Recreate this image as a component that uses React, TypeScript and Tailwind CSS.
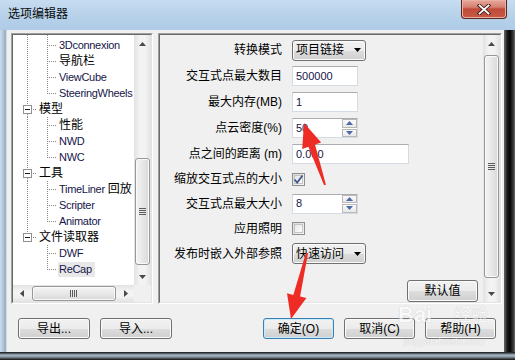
import React from "react";

const F = "font-[family-name:Liberation_Sans,Noto_Sans_CJK_SC,sans-serif]";

type LineMode = "full" | "top" | "none";

function ChildLines({ a, b }: { a: LineMode; b: LineMode }) {
  return (
    <svg width="45" height="16" className="shrink-0 block">
      {a !== "none" && (
        <line x1="14.5" y1="0" x2="14.5" y2={a === "full" ? 16 : 8} stroke="#8a8a8a" strokeDasharray="1 1" />
      )}
      {b !== "none" && (
        <line x1="34.5" y1="0" x2="34.5" y2={b === "full" ? 16 : 9} stroke="#8a8a8a" strokeDasharray="1 1" />
      )}
      <line x1="36" y1="8.5" x2="44" y2="8.5" stroke="#8a8a8a" strokeDasharray="1 1" />
    </svg>
  );
}

function ParentLines({ a }: { a: LineMode }) {
  return (
    <svg width="25" height="16" className="shrink-0 block">
      <line x1="14.5" y1="0" x2="14.5" y2="4" stroke="#8a8a8a" strokeDasharray="1 1" />
      {a === "full" && <line x1="14.5" y1="13" x2="14.5" y2="16" stroke="#8a8a8a" strokeDasharray="1 1" />}
      <rect x="10.5" y="4.5" width="8" height="8" fill="#fff" stroke="#919191" />
      <line x1="12" y1="8.5" x2="17" y2="8.5" stroke="#1a1a1a" />
      <line x1="20" y1="8.5" x2="24" y2="8.5" stroke="#8a8a8a" strokeDasharray="1 1" />
    </svg>
  );
}

type TreeRow = {
  kind: "child" | "parent";
  a: LineMode;
  b?: LineMode;
  label: React.ReactNode;
  selected?: boolean;
};

const lat = (t: string) => <span className="text-[11px] tracking-[-0.3px] text-[#16164a]">{t}</span>;
const cjk = (t: string) => <span className="text-[12px] text-black">{t}</span>;

const rows: TreeRow[] = [
  { kind: "child", a: "full", b: "full", label: lat("3Dconnexion") },
  { kind: "child", a: "full", b: "full", label: cjk("导航栏") },
  { kind: "child", a: "full", b: "full", label: lat("ViewCube") },
  { kind: "child", a: "full", b: "top", label: lat("SteeringWheels") },
  { kind: "parent", a: "full", label: cjk("模型") },
  { kind: "child", a: "full", b: "full", label: cjk("性能") },
  { kind: "child", a: "full", b: "full", label: lat("NWD") },
  { kind: "child", a: "full", b: "top", label: lat("NWC") },
  { kind: "parent", a: "full", label: cjk("工具") },
  {
    kind: "child",
    a: "full",
    b: "full",
    label: (
      <>
        {lat("TimeLiner")}
        <span className="ml-[3px] text-[12px] text-black">回放</span>
      </>
    ),
  },
  { kind: "child", a: "full", b: "full", label: lat("Scripter") },
  { kind: "child", a: "full", b: "top", label: lat("Animator") },
  { kind: "parent", a: "top", label: cjk("文件读取器") },
  { kind: "child", a: "none", b: "full", label: lat("DWF") },
  { kind: "child", a: "none", b: "top", label: lat("ReCap"), selected: true },
];

function Tri({ dir, color = "#4a4a4a" }: { dir: "up" | "down" | "left" | "right"; color?: string }) {
  if (dir === "up")
    return (
      <svg width="7" height="4" className="block">
        <polygon points="0,4 3.5,0 7,4" fill={color} />
      </svg>
    );
  if (dir === "down")
    return (
      <svg width="7" height="4" className="block">
        <polygon points="0,0 7,0 3.5,4" fill={color} />
      </svg>
    );
  if (dir === "left")
    return (
      <svg width="4" height="7" className="block">
        <polygon points="4,0 4,7 0,3.5" fill={color} />
      </svg>
    );
  return (
    <svg width="4" height="7" className="block">
      <polygon points="0,0 4,3.5 0,7" fill={color} />
    </svg>
  );
}

function VGrip() {
  return (
    <svg width="7" height="8" className="block">
      <line x1="0" y1="0.5" x2="7" y2="0.5" stroke="#5c5c5c" />
      <line x1="0" y1="2.5" x2="7" y2="2.5" stroke="#5c5c5c" />
      <line x1="0" y1="4.5" x2="7" y2="4.5" stroke="#5c5c5c" />
      <line x1="0" y1="6.5" x2="7" y2="6.5" stroke="#5c5c5c" />
    </svg>
  );
}

function HGrip() {
  return (
    <svg width="8" height="7" className="block">
      <line x1="0.5" y1="0" x2="0.5" y2="7" stroke="#5c5c5c" />
      <line x1="2.5" y1="0" x2="2.5" y2="7" stroke="#5c5c5c" />
      <line x1="4.5" y1="0" x2="4.5" y2="7" stroke="#5c5c5c" />
      <line x1="6.5" y1="0" x2="6.5" y2="7" stroke="#5c5c5c" />
    </svg>
  );
}

function Btn({
  children,
  focused,
  className,
}: {
  children: React.ReactNode;
  focused?: boolean;
  className?: string;
}) {
  return (
    <div
      className={`${className ?? ""} h-[21px] shrink-0 rounded-[3px] border ${
        focused
          ? "border-[#3c7fb1] shadow-[inset_0_0_0_1px_#c8ecff]"
          : "border-[#707070] shadow-[inset_0_0_0_1px_#fbfbfb]"
      } bg-[linear-gradient(to_bottom,#f2f2f2_0%,#ebebeb_50%,#dddddd_51%,#cfcfcf_100%)] flex items-center justify-center text-[12px] leading-[14px] text-black`}
    >
      {children}
    </div>
  );
}

function Input({ value, wide }: { value: string; wide?: boolean }) {
  return (
    <div
      className={`${wide ? "w-[117px]" : "w-[66px]"} h-[20px] bg-white border border-[#d5dbe2] border-t-[#abadb3] flex items-center pl-[3px] text-[11px] text-[#16164a]`}
    >
      {value}
    </div>
  );
}

function Spin({ value }: { value: string }) {
  return (
    <div className="w-[66px] h-[20px] bg-white border border-[#d5dbe2] border-t-[#abadb3] flex items-center pl-[3px] text-[11px] text-[#16164a]">
      <span>{value}</span>
      <div className="ml-auto mr-[0px] w-[15px] h-[18px] flex flex-col gap-[1px]">
        <div className="flex-1 border border-[#b8b8b8] bg-[linear-gradient(to_bottom,#fbfbfb,#e8e8e8)] flex items-center justify-center">
          <Tri dir="up" color="#4b6aa5" />
        </div>
        <div className="flex-1 border border-[#b8b8b8] bg-[linear-gradient(to_bottom,#fbfbfb,#e8e8e8)] flex items-center justify-center">
          <Tri dir="down" color="#4b6aa5" />
        </div>
      </div>
    </div>
  );
}

function Combo({ value }: { value: string }) {
  return (
    <div className="w-[74px] h-[21px] rounded-[3px] border border-[#707070] shadow-[inset_0_0_0_1px_#fbfbfb] bg-[linear-gradient(to_bottom,#f2f2f2_0%,#ebebeb_50%,#dddddd_51%,#cfcfcf_100%)] flex items-center pl-[3px] text-[12px] leading-[14px] text-black">
      <span>{value}</span>
      <div className="ml-auto mr-[4px]">
        <Tri dir="down" color="#000" />
      </div>
    </div>
  );
}

function Check({ checked }: { checked?: boolean }) {
  return (
    <div className="w-[13px] h-[13px] border border-[#8e8f8f] bg-[linear-gradient(135deg,#d9d9d9,#f7f7f7)] flex items-center justify-center">
      <div className="w-[9px] h-[9px] border border-[#c4c4c4] bg-[linear-gradient(135deg,#e6e6e6,#fdfdfd)] flex items-center justify-center">
        {checked && (
          <svg width="9" height="9" className="block overflow-visible">
            <path d="M0.5 4.5 L3.2 7.5 L8.5 0.5" fill="none" stroke="#41568c" strokeWidth="1.8" />
          </svg>
        )}
      </div>
    </div>
  );
}

function PropRow({ h, label, children }: { h: string; label: React.ReactNode; children: React.ReactNode }) {
  return (
    <div className={`${h} flex items-center`}>
      <div className="w-[122px] text-right text-[12px] leading-[14px] text-black whitespace-nowrap">{label}</div>
      <div className="ml-[10px] flex items-center">{children}</div>
    </div>
  );
}

const trackV = "bg-[linear-gradient(to_right,#e2e2e2,#f3f3f3_35%,#f3f3f3_65%,#e2e2e2)]";
const trackH = "bg-[linear-gradient(to_bottom,#e2e2e2,#f3f3f3_35%,#f3f3f3_65%,#e2e2e2)]";

export default function App() {
  return (
    <div className={`${F} relative w-[515px] h-[360px] overflow-hidden flex flex-col bg-[#b9d3ea] select-none`}>
      {/* title bar */}
      <div className="h-[30px] shrink-0 flex items-start bg-[linear-gradient(to_bottom,#c6dcf0,#b5d0e9_60%,#afcbe6)]">
        <div className="pl-[8px] pt-[7px] text-[12px] leading-[14px] text-[#0a0a0a]">选项编辑器</div>
        <div className="ml-auto mr-[8px] w-[46px] h-[19px] rounded-b-[4px] border border-t-0 border-[#5c2620] bg-[linear-gradient(to_bottom,#e6a99d,#d5806f_40%,#c04a3a_50%,#c75a45_100%)] shadow-[inset_0_0_0_1px_#eab0a4] flex items-center justify-center">
          <svg width="14" height="11" className="block">
            <path d="M2.5 1.5 L11.5 9.5 M11.5 1.5 L2.5 9.5" stroke="#3e1a15" strokeWidth="3.6" strokeLinecap="square" />
            <path d="M2.5 1.5 L11.5 9.5 M11.5 1.5 L2.5 9.5" stroke="#ffffff" strokeWidth="1.8" strokeLinecap="square" />
          </svg>
        </div>
      </div>

      <div className="flex h-[322px] shrink-0">
        <div className="w-[7px] bg-[linear-gradient(to_right,#c9dcef,#b2c7da_45%,#93a7ba_75%,#e9f0f6)]" />
        {/* client area */}
        <div className="w-[497px] bg-[#f0f0f0] flex flex-col pt-[3px]">
          <div className="flex pl-[4px] h-[271px]">
            {/* tree panel */}
            <div className="w-[142px] h-full border border-t-[#a0a0a0] border-l-[#a0a0a0] border-b-white border-r-white">
              <div className="w-full h-full border border-t-[#696969] border-l-[#696969] border-b-[#e3e3e3] border-r-[#e3e3e3] flex flex-col bg-white">
                <div className="flex flex-1 min-h-0">
                  <div className="flex-1 overflow-hidden flex flex-col">
                    <svg width="45" height="2" className="block shrink-0">
                      <line x1="14.5" y1="0" x2="14.5" y2="2" stroke="#8a8a8a" strokeDasharray="1 1" />
                      <line x1="34.5" y1="0" x2="34.5" y2="2" stroke="#8a8a8a" strokeDasharray="1 1" />
                    </svg>
                    {rows.map((r, i) => (
                      <div key={i} className="h-[16px] flex items-center whitespace-nowrap leading-[14px]">
                        {r.kind === "child" ? <ChildLines a={r.a} b={r.b ?? "full"} /> : <ParentLines a={r.a} />}
                        <div className={`${r.selected ? "bg-[#e8e8e8]" : ""} h-[15px] flex items-center pl-[1px] pr-[3px]`}>
                          {r.label}
                        </div>
                      </div>
                    ))}
                  </div>
                  {/* vertical scrollbar */}
                  <div className={`w-[17px] h-full flex flex-col ${trackV}`}>
                    <div className="h-[17px] flex items-center justify-center">
                      <Tri dir="up" />
                    </div>
                    <div className="h-[106px]" />
                    <div className="h-[107px] ml-[1px] mr-[1px] rounded-[3px] border border-[#979797] bg-[linear-gradient(to_right,#f4f4f4,#e8e8e8_50%,#d8d8d8)] shadow-[inset_0_0_0_1px_#fafafa] flex items-center justify-center">
                      <VGrip />
                    </div>
                    <div className="flex-1" />
                    <div className="h-[17px] flex items-center justify-center">
                      <Tri dir="down" />
                    </div>
                  </div>
                </div>
                {/* horizontal scrollbar */}
                <div className="h-[17px] flex shrink-0">
                  <div className={`flex-1 flex ${trackH}`}>
                    <div className="w-[17px] flex items-center justify-center">
                      <Tri dir="left" />
                    </div>
                    <div className="w-[84px] ml-[2px] my-[1px] rounded-[3px] border border-[#979797] bg-[linear-gradient(to_bottom,#f4f4f4,#e8e8e8_50%,#d8d8d8)] shadow-[inset_0_0_0_1px_#fafafa] flex items-center justify-center">
                      <HGrip />
                    </div>
                    <div className="flex-1" />
                    <div className="w-[17px] flex items-center justify-center">
                      <Tri dir="right" />
                    </div>
                  </div>
                  <div className="w-[17px] bg-[#f0f0f0]" />
                </div>
              </div>
            </div>

            <div className="w-[5px]" />

            {/* properties panel */}
            <div className="w-[344px] h-full border border-t-[#a0a0a0] border-l-[#a0a0a0] border-b-white border-r-white">
              <div className="w-full h-full border border-t-[#696969] border-l-[#696969] border-b-[#e3e3e3] border-r-[#e3e3e3] flex bg-[#f0f0f0]">
                <div className="flex-1 overflow-hidden flex flex-col pt-[3px]">
                  <PropRow h="h-[25px]" label="转换模式">
                    <Combo value="项目链接" />
                  </PropRow>
                  <PropRow h="h-[27px]" label="交互式点最大数目">
                    <Input value="500000" />
                  </PropRow>
                  <PropRow h="h-[26px]" label="最大内存(MB)">
                    <Input value="1" />
                  </PropRow>
                  <PropRow h="h-[26px]" label="点云密度(%)">
                    <Spin value="50" />
                  </PropRow>
                  <PropRow h="h-[27px]" label="点之间的距离 (m)">
                    <Input value="0.000" wide />
                  </PropRow>
                  <PropRow h="h-[23px]" label="缩放交互式点的大小">
                    <Check checked />
                  </PropRow>
                  <PropRow h="h-[26px]" label="交互式点最大大小">
                    <Spin value="8" />
                  </PropRow>
                  <PropRow h="h-[25px]" label="应用照明">
                    <Check />
                  </PropRow>
                  <PropRow h="h-[25px]" label="发布时嵌入外部参照">
                    <Combo value="快速访问" />
                  </PropRow>
                  <div className="mt-[14px] flex">
                    <Btn className="ml-auto mr-[5px] w-[71px] h-[22px]">默认值</Btn>
                  </div>
                </div>
                {/* vertical scrollbar */}
                <div className={`w-[17px] h-full flex flex-col ${trackV}`}>
                  <div className="h-[17px] flex items-center justify-center">
                    <Tri dir="up" />
                  </div>
                  <div className="h-[3px]" />
                  <div className="h-[223px] ml-[1px] mr-[1px] rounded-[3px] border border-[#979797] bg-[linear-gradient(to_right,#f4f4f4,#e8e8e8_50%,#d8d8d8)] shadow-[inset_0_0_0_1px_#fafafa] flex items-center justify-center">
                    <VGrip />
                  </div>
                  <div className="flex-1" />
                  <div className="h-[17px] flex items-center justify-center">
                    <Tri dir="down" />
                  </div>
                </div>
              </div>
            </div>
          </div>

          {/* bottom buttons */}
          <div className="flex mt-[14px] pl-[11px] pr-[8px]">
            <Btn className="w-[72px]">导出...</Btn>
            <Btn className="w-[72px] ml-[10px]">导入...</Btn>
            <div className="flex-1" />
            <Btn className="w-[71px]" focused>
              确定(O)
            </Btn>
            <Btn className="w-[71px] ml-[10px]">取消(C)</Btn>
            <Btn className="w-[71px] ml-[10px]">帮助(H)</Btn>
          </div>
        </div>
        <div className="flex-1 bg-[linear-gradient(to_right,#6a6a6a,#1a1a1a_30%,#050505_55%,#3c3c3c_85%,#6a6a6a)]" />
      </div>
      <div className="flex-1 bg-[linear-gradient(to_bottom,#2a2a2a_0px,#2a2a2a_1px,#7f91a2_2px,#a8b8c6_4px,#3a3a3a_7px,#111111_8px)]" />

      {/* watermark */}
      <div className="absolute left-[398px] top-[303px] flex items-end pointer-events-none opacity-60">
        <span className="text-[22px] leading-[24px] font-bold text-white [text-shadow:0_0_1px_#9a9a9a]">Bai</span>
        <span className="ml-[22px] text-[17px] leading-[22px] text-white [text-shadow:0_0_1px_#9a9a9a]">经验</span>
      </div>
      <div className="absolute left-[404px] top-[336px] text-[10px] leading-[12px] text-white opacity-50 pointer-events-none [text-shadow:0_0_1px_#8a8a8a]">
        jingyan.baidu.com
      </div>

      {/* red annotation arrows */}
      <svg width="515" height="360" className="absolute left-0 top-0 pointer-events-none">
        <polygon
          points="304,123 321.2,142.5 315,144.6 325.9,184.7 324.1,185.3 308.4,146.8 302.2,148.9"
          fill="#ee2b24"
        />
        <polygon
          points="291,319 306.4,298.1 300.1,296.5 308,253.2 306,252.8 293.3,294.9 287,293.3"
          fill="#ee2b24"
        />
      </svg>
    </div>
  );
}
